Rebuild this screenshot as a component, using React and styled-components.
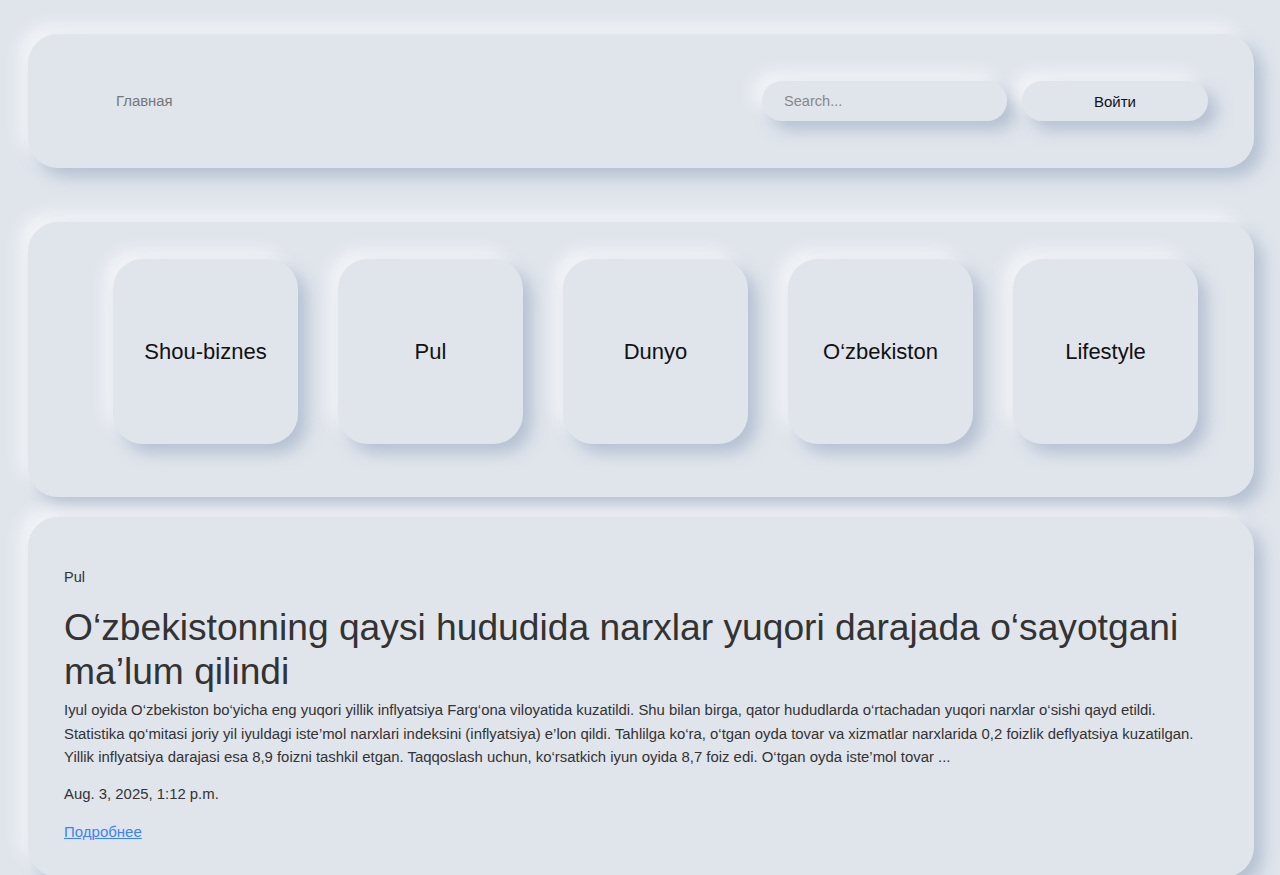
import styled, { createGlobalStyle } from "styled-components";

const GlobalStyle = createGlobalStyle`
  body {
    margin: 0;
    background: #e0e5ec;
    font-family: "Liberation Sans", Arial, sans-serif;
    color: #333;
  }
`;

const raised = `
  background: #e0e5ec;
  box-shadow: 9px 9px 16px rgba(163, 177, 198, 0.7),
    -9px -9px 16px rgba(255, 255, 255, 0.6);
`;

const Page = styled.div`
  padding: 34px 26px 20px 28px;
  display: flex;
  flex-direction: column;
`;

const Header = styled.header`
  ${raised}
  border-radius: 30px;
  height: 134px;
  display: flex;
  align-items: center;
  padding: 0 46px 0 88px;
  box-sizing: border-box;
`;

const NavLink = styled.a`
  color: #777;
  font-size: 14.9px;
  text-decoration: none;
  flex: 1;
`;

const Search = styled.input`
  ${raised}
  border: none;
  outline: none;
  width: 245px;
  height: 40px;
  border-radius: 20px;
  padding: 0 22px;
  box-sizing: border-box;
  font-family: inherit;
  font-size: 14.6px;
  color: #333;
  &::placeholder {
    color: #888;
  }
`;

const LoginButton = styled.button`
  ${raised}
  border: none;
  width: 186px;
  height: 40px;
  margin-left: 15px;
  border-radius: 20px;
  font-family: inherit;
  font-size: 15px;
  color: #111;
  cursor: pointer;
`;

const Categories = styled.section`
  ${raised}
  margin-top: 54px;
  border-radius: 30px;
  display: flex;
  gap: 40px;
  padding: 37px 56px 53px 85px;
`;

const Tile = styled.div`
  ${raised}
  width: 185px;
  height: 185px;
  border-radius: 30px;
  display: flex;
  align-items: center;
  justify-content: center;
  font-size: 22px;
  color: #111;
`;

const Article = styled.article`
  ${raised}
  margin-top: 20px;
  border-radius: 30px;
  padding: 52px 36px 36px;
`;

const Label = styled.div`
  font-size: 14.5px;
  color: #333;
`;

const Title = styled.h1`
  font-size: 37.2px;
  font-weight: 400;
  line-height: 44px;
  margin: 20px 0 6px;
  color: #333;
`;

const Body = styled.p`
  font-size: 14.9px;
  line-height: 23.5px;
  margin: 0;
  color: #333;
`;

const DateLine = styled.div`
  font-size: 14.9px;
  margin-top: 16px;
  color: #333;
`;

const More = styled.a`
  display: inline-block;
  margin-top: 21px;
  font-size: 15px;
  color: #3b82f6;
  text-decoration: underline;
`;

const categories = ["Shou-biznes", "Pul", "Dunyo", "O‘zbekiston", "Lifestyle"];

export default function App() {
  return (
    <>
      <GlobalStyle />
      <Page>
        <Header>
          <NavLink href="#">Главная</NavLink>
          <Search placeholder="Search..." />
          <LoginButton>Войти</LoginButton>
        </Header>
        <Categories>
          {categories.map((c) => (
            <Tile key={c}>{c}</Tile>
          ))}
        </Categories>
        <Article>
          <Label>Pul</Label>
          <Title>O‘zbekistonning qaysi hududida narxlar yuqori darajada o‘sayotgani ma’lum qilindi</Title>
          <Body>
            Iyul oyida O‘zbekiston bo‘yicha eng yuqori yillik inflyatsiya Farg‘ona viloyatida kuzatildi. Shu bilan birga, qator hududlarda o‘rtachadan yuqori narxlar o‘sishi qayd etildi. Statistika qo‘mitasi joriy yil iyuldagi iste’mol narxlari indeksini (inflyatsiya) e’lon qildi. Tahlilga ko‘ra, o‘tgan oyda tovar va xizmatlar narxlarida 0,2 foizlik deflyatsiya kuzatilgan. Yillik inflyatsiya darajasi esa 8,9 foizni tashkil etgan. Taqqoslash uchun, ko‘rsatkich iyun oyida 8,7 foiz edi. O‘tgan oyda iste’mol tovar ...
          </Body>
          <DateLine>Aug. 3, 2025, 1:12 p.m.</DateLine>
          <More href="#">Подробнее</More>
        </Article>
      </Page>
    </>
  );
}
